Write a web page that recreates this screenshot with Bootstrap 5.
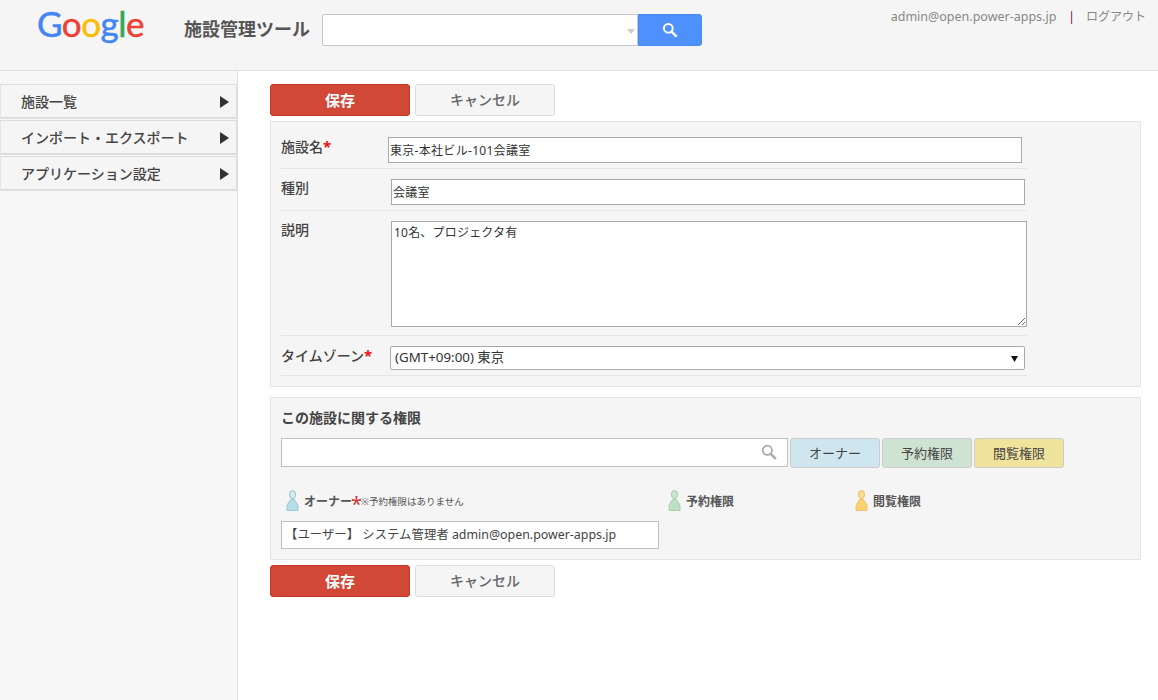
<!DOCTYPE html>
<html lang="ja">
<head>
<meta charset="utf-8">
<title>施設管理ツール</title>
<link href="https://cdn.jsdelivr.net/npm/bootstrap@5.3.0/dist/css/bootstrap.min.css" rel="stylesheet">
<style>
html,body{height:100%;}
body{background:#fff;color:#333;font-family:"Noto Sans","Noto Sans CJK JP",sans-serif;font-size:12px;overflow:hidden;}
.top-bar{height:71px;background:#f5f5f5;border-bottom:1px solid #e0e0e0;padding-left:37px;}
.logo-word{font-family:Lato,sans-serif;font-size:35px;line-height:1;width:107px;margin-top:6px;letter-spacing:-.5px;white-space:nowrap;-webkit-text-stroke:.5px;}
.app-title{font-family:"Noto Sans CJK JP",sans-serif;font-size:18px;font-weight:700;color:#555;margin-left:40px;margin-top:16px;width:138px;line-height:24px;white-space:nowrap;}
.combo{width:380px;height:32px;margin-top:14px;}
.combo-field{position:relative;width:316px;}
.combo-field .form-control{height:32px;border:1px solid #c8c8c8;border-radius:2px 0 0 2px;background:#fff;}
.combo-caret{position:absolute;right:3px;top:15px;width:0;height:0;border:4px solid transparent;border-top:5px solid #ccc;border-bottom:0;}
.combo-btn{width:64px;height:32px;background:#4d90fe;border:1px solid #4a8af0;border-radius:0 3px 3px 0;padding:0;display:flex;align-items:center;justify-content:center;}
.user-area{margin-left:auto;padding-right:12px;padding-top:8px;color:#888;line-height:18px;font-size:12px;white-space:nowrap;}
.user-mail{font-size:12.5px;}
.user-sep{color:#650a5a;margin:0 11px 0 12px;}
.layout{height:629px;}
.side-col{width:238px;background:#f7f7f7;border-right:1px solid #e0e0e0;padding-top:13px;flex:none;}
.side-item{height:35px;margin-bottom:1px;border:1px solid #ddd;border-left:1px solid #e5e5e5;border-bottom-width:2px;background:#f5f5f5;padding:1px 7px 0 20px;font-size:14px;font-weight:500;color:#444;}
.side-arrow{font-size:0;width:0;height:0;border-left:9px solid #333;border-top:6px solid transparent;border-bottom:6px solid transparent;}
.main-col{width:871px;margin-left:32px;padding-top:13px;flex:none;}
.act-btn{width:140px;height:32px;border-radius:3px;font-size:14px;font-weight:700;padding:0;line-height:30px;}
.act-save,.act-save:hover{background:#d14836;border:1px solid #c53727;color:#fff;font-size:15px;}
.act-cancel,.act-cancel:hover{background:#f5f5f5;border:1px solid #ddd;color:#666;font-weight:500;margin-left:5px;}
.pane{background:#f5f5f5;border:1px solid #e5e5e5;padding:0 10px;}
.pane-form{margin-top:5px;padding-top:15px;padding-bottom:10px;}
.pane-perm{margin-top:10px;height:163px;}
.frow{width:746px;border-bottom:1px solid #e6e6e6;padding-bottom:5px;margin-top:10px;}
.frow:first-child{margin-top:0;}
.frow-tall{padding-bottom:8px;}
.flabel{font-size:14px;font-weight:500;color:#444;line-height:18px;flex:none;}
.req{color:#e11;font-weight:700;font-size:15px;}
.w-a{width:107px;}.w-b{width:110px;}.w-c{width:109px;}
.fld,.fld:focus{border:1px solid #aaa;border-radius:0;background-color:#fff;color:#333;font-size:12px;letter-spacing:.3px;padding:0 1px;box-shadow:none;flex:none;font-family:"Noto Sans","Noto Sans CJK JP",sans-serif;}
.fld-name{width:634px;height:26px;}
.fld-kind{width:634px;height:26px;}
.fld-note{width:636px;height:106px;padding:2px;display:block;min-height:0;line-height:18px;letter-spacing:.2px;}
.fld-zone,.fld-zone:focus{width:635px;height:24px;padding:0 4px;border-radius:2px;font-size:13.33px;letter-spacing:0;background-position:right 6px center;background-size:7px 7px;background-image:url("data:image/svg+xml,%3Csvg xmlns='http://www.w3.org/2000/svg' viewBox='0 0 8 8'%3E%3Cpath d='M0 1h8L4 8z' fill='%23111'/%3E%3C/svg%3E");}
.perm-title{font-size:14px;font-weight:700;color:#444;height:40px;padding-top:10px;line-height:20px;}
.perm-search{position:relative;width:507px;height:29px;}
.perm-search .form-control{height:29px;border:1px solid #c0c0c0;border-radius:0;background:#fff;}
.perm-glass{position:absolute;right:11px;top:6px;}
.role-btn{width:90px;height:30px;border:1px solid #ccc;border-radius:3px;font-size:13px;padding:0;line-height:28px;color:#444;margin-left:2px;font-weight:400;}
.role-owner,.role-owner:hover{background:#cfe6ee;}
.role-book,.role-book:hover{background:#cfe3d2;}
.role-view,.role-view:hover{background:#f0e49c;}
.legend-row{margin-top:22px;height:21px;padding-left:5px;font-size:12px;font-weight:700;color:#555;}
.leg-a{width:382px;}.leg-b{width:187px;}
.legend-row svg{flex:none;margin-right:5px;}
.legend-row span{margin-top:2px;}
.legend-row .leg-note{font-size:9.5px;font-weight:400;color:#555;margin-top:3px;}
.legend-row .leg-star{color:#c33;font-size:20px;font-weight:400;line-height:1;margin-top:6px;margin-left:-1px;margin-right:-1px;}
.owner-box{width:378px;height:28px;margin-top:10px;border:1px solid #c0c0c0;background:#fff;padding:0 3px;line-height:26px;font-size:12.4px;color:#444;white-space:nowrap;}
.bottom-acts{margin-top:5px;}
</style>
</head>
<body>
<header class="top-bar d-flex align-items-start">
  <div class="logo-word"><span style="color:#4285f4">G</span><span style="color:#ea4335">o</span><span style="color:#fbbc05">o</span><span style="color:#4285f4">g</span><span style="color:#34a853">l</span><span style="color:#ea4335">e</span></div>
  <div class="app-title">施設管理ツール</div>
  <div class="combo d-flex">
    <div class="combo-field"><input class="form-control" type="text" aria-label="検索"><span class="combo-caret"></span></div>
    <button class="btn combo-btn" type="button" aria-label="検索">
      <svg width="16" height="16" viewBox="0 0 16 16"><circle cx="6.3" cy="6.3" r="4.4" fill="none" stroke="#fff" stroke-width="2"/><path d="M9.6 9.6L14.6 14.6" stroke="#fff" stroke-width="2.6"/></svg>
    </button>
  </div>
  <div class="user-area"><span class="user-mail">admin@open.power-apps.jp</span><span class="user-sep">|</span>ログアウト</div>
</header>
<div class="layout d-flex">
  <nav class="side-col">
    <div class="side-item d-flex align-items-center justify-content-between"><span>施設一覧</span><span class="side-arrow"></span></div>
    <div class="side-item d-flex align-items-center justify-content-between"><span>インポート・エクスポート</span><span class="side-arrow"></span></div>
    <div class="side-item d-flex align-items-center justify-content-between"><span>アプリケーション設定</span><span class="side-arrow"></span></div>
  </nav>
  <main class="main-col">
    <div class="d-flex"><button class="btn act-btn act-save" type="button">保存</button><button class="btn act-btn act-cancel" type="button">キャンセル</button></div>
    <section class="pane pane-form">
      <div class="frow d-flex"><div class="flabel w-a">施設名<span class="req">*</span></div><input class="form-control fld fld-name" type="text" value="東京-本社ビル-101会議室"></div>
      <div class="frow d-flex"><div class="flabel w-b">種別</div><input class="form-control fld fld-kind" type="text" value="会議室"></div>
      <div class="frow frow-tall d-flex"><div class="flabel w-b">説明</div><textarea class="form-control fld fld-note">10名、プロジェクタ有</textarea></div>
      <div class="frow d-flex"><div class="flabel w-c">タイムゾーン<span class="req">*</span></div><select class="form-select fld fld-zone"><option>(GMT+09:00) 東京</option></select></div>
    </section>
    <section class="pane pane-perm">
      <div class="perm-title">この施設に関する権限</div>
      <div class="d-flex">
        <div class="perm-search"><input class="form-control" type="text" aria-label="検索">
          <svg class="perm-glass" width="16" height="16" viewBox="0 0 16 16"><circle cx="6.3" cy="6.3" r="4.6" fill="none" stroke="#aaa" stroke-width="1.8"/><path d="M9.8 9.8L14.8 14.8" stroke="#aaa" stroke-width="2.6"/></svg>
        </div>
        <button class="btn role-btn role-owner" type="button">オーナー</button>
        <button class="btn role-btn role-book" type="button">予約権限</button>
        <button class="btn role-btn role-view" type="button">閲覧権限</button>
      </div>
      <div class="legend-row d-flex">
        <div class="leg-a d-flex align-items-center">
          <svg width="13" height="21" viewBox="0 0 13 21"><ellipse cx="6.5" cy="4.5" rx="3" ry="4" fill="#d5ebef" stroke="#8fbfc9"/><path d="M4.6 9.5h3.8L12 15v5.5H1V15z" fill="#b5dde5" stroke="#8fc0ca" stroke-width=".8"/></svg>
          <span>オーナー</span><span class="leg-star">*</span><span class="leg-note">※予約権限はありません</span>
        </div>
        <div class="leg-b d-flex align-items-center">
          <svg width="13" height="21" viewBox="0 0 13 21"><ellipse cx="6.5" cy="4.5" rx="3" ry="4" fill="#cfe6d2" stroke="#9cc8a4"/><path d="M4.6 9.5h3.8L12 15v5.5H1V15z" fill="#bfe0c5" stroke="#9cc8a4" stroke-width=".8"/></svg>
          <span>予約権限</span>
        </div>
        <div class="d-flex align-items-center">
          <svg width="13" height="21" viewBox="0 0 13 21"><ellipse cx="6.5" cy="4.5" rx="3" ry="4" fill="#fbdf95" stroke="#e8bd5a"/><path d="M4.6 9.5h3.8L12 15v5.5H1V15z" fill="#f9d273" stroke="#e8bd5a" stroke-width=".8"/></svg>
          <span>閲覧権限</span>
        </div>
      </div>
      <div class="owner-box">【ユーザー】 システム管理者 admin@open.power-apps.jp</div>
    </section>
    <div class="d-flex bottom-acts"><button class="btn act-btn act-save" type="button">保存</button><button class="btn act-btn act-cancel" type="button">キャンセル</button></div>
  </main>
</div>
<script src="https://cdn.jsdelivr.net/npm/bootstrap@5.3.0/dist/js/bootstrap.bundle.min.js"></script>
</body>
</html>
